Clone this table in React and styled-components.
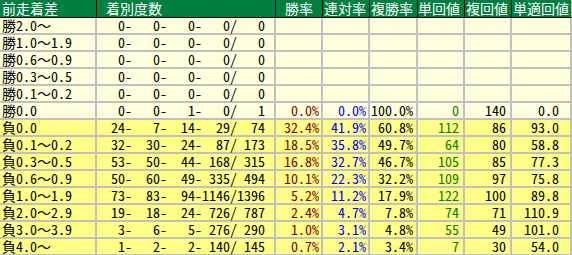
import React from "react";
import styled, { createGlobalStyle } from "styled-components";

const GlobalStyle = createGlobalStyle`
  html, body {
    margin: 0;
    padding: 0;
    background: #ffffff;
  }
  body {
    font-family: "Noto Sans CJK JP", "DejaVu Sans Mono", monospace;
    font-feature-settings: "hwid" 1;
  }
`;

const COLS = "95px 177px 45px 45px 46px 45px 45px 58px";

const Table = styled.div`
  width: 572px;
  height: 255px;
  overflow: hidden;
  font-size: 14px;
`;

const HeadRow = styled.div`
  display: grid;
  grid-template-columns: ${COLS};
  column-gap: 2px;
  height: 17px;
  padding-right: 1px;
  background: #000000;
  border-bottom: 1px solid #000000;
  border-right: 1px solid #c0c0c0;
`;

const HeadCell = styled.div`
  background: #007f3f;
  box-shadow: 1px 0 0 #007f3f;
  color: #ffffff;
  line-height: 17px;
  padding-left: ${(p) => p.$indent}px;
  white-space: pre;
`;

const Body = styled.div`
  display: grid;
  grid-template-columns: ${COLS};
  grid-auto-rows: 15px;
  gap: 2px;
  padding-right: 2px;
  padding-bottom: 2px;
  background: #c0c0c0;
`;

const Cell = styled.div`
  background: ${(p) => (p.$lose ? "#ffff88" : "#ffffdd")};
  color: ${(p) => p.$color || "#000000"};
  text-align: ${(p) => (p.$left ? "left" : "right")};
  padding-left: ${(p) => (p.$left ? 2 : 0)}px;
  padding-right: ${(p) => p.$pr || 0}px;
  line-height: 15px;
  white-space: pre;
`;

/* full-width wave dash, kept out of the half-width feature */
const Wave = styled.span`
  font-feature-settings: normal;
`;

const heads = [
  ["前走着差", 2],
  ["着別度数", 9],
  ["勝率", 9],
  ["連対率", 1],
  ["複勝率", 1],
  ["単回値", 0],
  ["複回値", 1],
  ["単適回値", 1],
];

const statCols = [
  { color: "#800000", pr: 2 },
  { color: "#0000ff", pr: 2 },
  { color: "#000000", pr: 3 },
  { color: "#008000", pr: 4 },
  { color: "#000000", pr: 4 },
  { color: "#000000", pr: 11 },
];

const rows = [
  ["勝2.0～", [0, 0, 0, 0, 0]],
  ["勝1.0～1.9", [0, 0, 0, 0, 0]],
  ["勝0.6～0.9", [0, 0, 0, 0, 0]],
  ["勝0.3～0.5", [0, 0, 0, 0, 0]],
  ["勝0.1～0.2", [0, 0, 0, 0, 0]],
  ["勝0.0", [0, 0, 1, 0, 1], ["0.0%", "0.0%", "100.0%", "0", "140", "0.0"]],
  ["負0.0", [24, 7, 14, 29, 74], ["32.4%", "41.9%", "60.8%", "112", "86", "93.0"]],
  ["負0.1～0.2", [32, 30, 24, 87, 173], ["18.5%", "35.8%", "49.7%", "64", "80", "58.8"]],
  ["負0.3～0.5", [53, 50, 44, 168, 315], ["16.8%", "32.7%", "46.7%", "105", "85", "77.3"]],
  ["負0.6～0.9", [50, 60, 49, 335, 494], ["10.1%", "22.3%", "32.2%", "109", "97", "75.8"]],
  ["負1.0～1.9", [73, 83, 94, 1146, 1396], ["5.2%", "11.2%", "17.9%", "122", "100", "89.8"]],
  ["負2.0～2.9", [19, 18, 24, 726, 787], ["2.4%", "4.7%", "7.8%", "74", "71", "110.9"]],
  ["負3.0～3.9", [3, 6, 5, 276, 290], ["1.0%", "3.1%", "4.8%", "55", "49", "101.0"]],
  ["負4.0～", [1, 2, 2, 140, 145], ["0.7%", "2.1%", "3.4%", "7", "30", "54.0"]],
];

const pad = (n) => String(n).padStart(4, " ");

const counts = ([a, b, c, d, e]) =>
  `${pad(a)}-${pad(b)}-${pad(c)}-${pad(d)}/${pad(e)}`;

const Label = ({ text }) => {
  const [from, to] = text.split("～");
  return (
    <>
      {from}
      <Wave>～</Wave>
      {to}
    </>
  );
};

export default function App() {
  return (
    <>
      <GlobalStyle />
      <Table>
        <HeadRow>
          {heads.map(([label, indent]) => (
            <HeadCell key={label} $indent={indent}>
              {label}
            </HeadCell>
          ))}
        </HeadRow>
        <Body>
          {rows.map(([label, cnt, stats]) => {
            const lose = label.startsWith("負");
            return (
              <React.Fragment key={label}>
                <Cell $lose={lose} $left>
                  {label.includes("～") ? <Label text={label} /> : label}
                </Cell>
                <Cell $lose={lose} $pr={10}>
                  {counts(cnt)}
                </Cell>
                {statCols.map((col, i) => (
                  <Cell key={i} $lose={lose} $color={col.color} $pr={col.pr}>
                    {stats ? stats[i] : ""}
                  </Cell>
                ))}
              </React.Fragment>
            );
          })}
        </Body>
      </Table>
    </>
  );
}
